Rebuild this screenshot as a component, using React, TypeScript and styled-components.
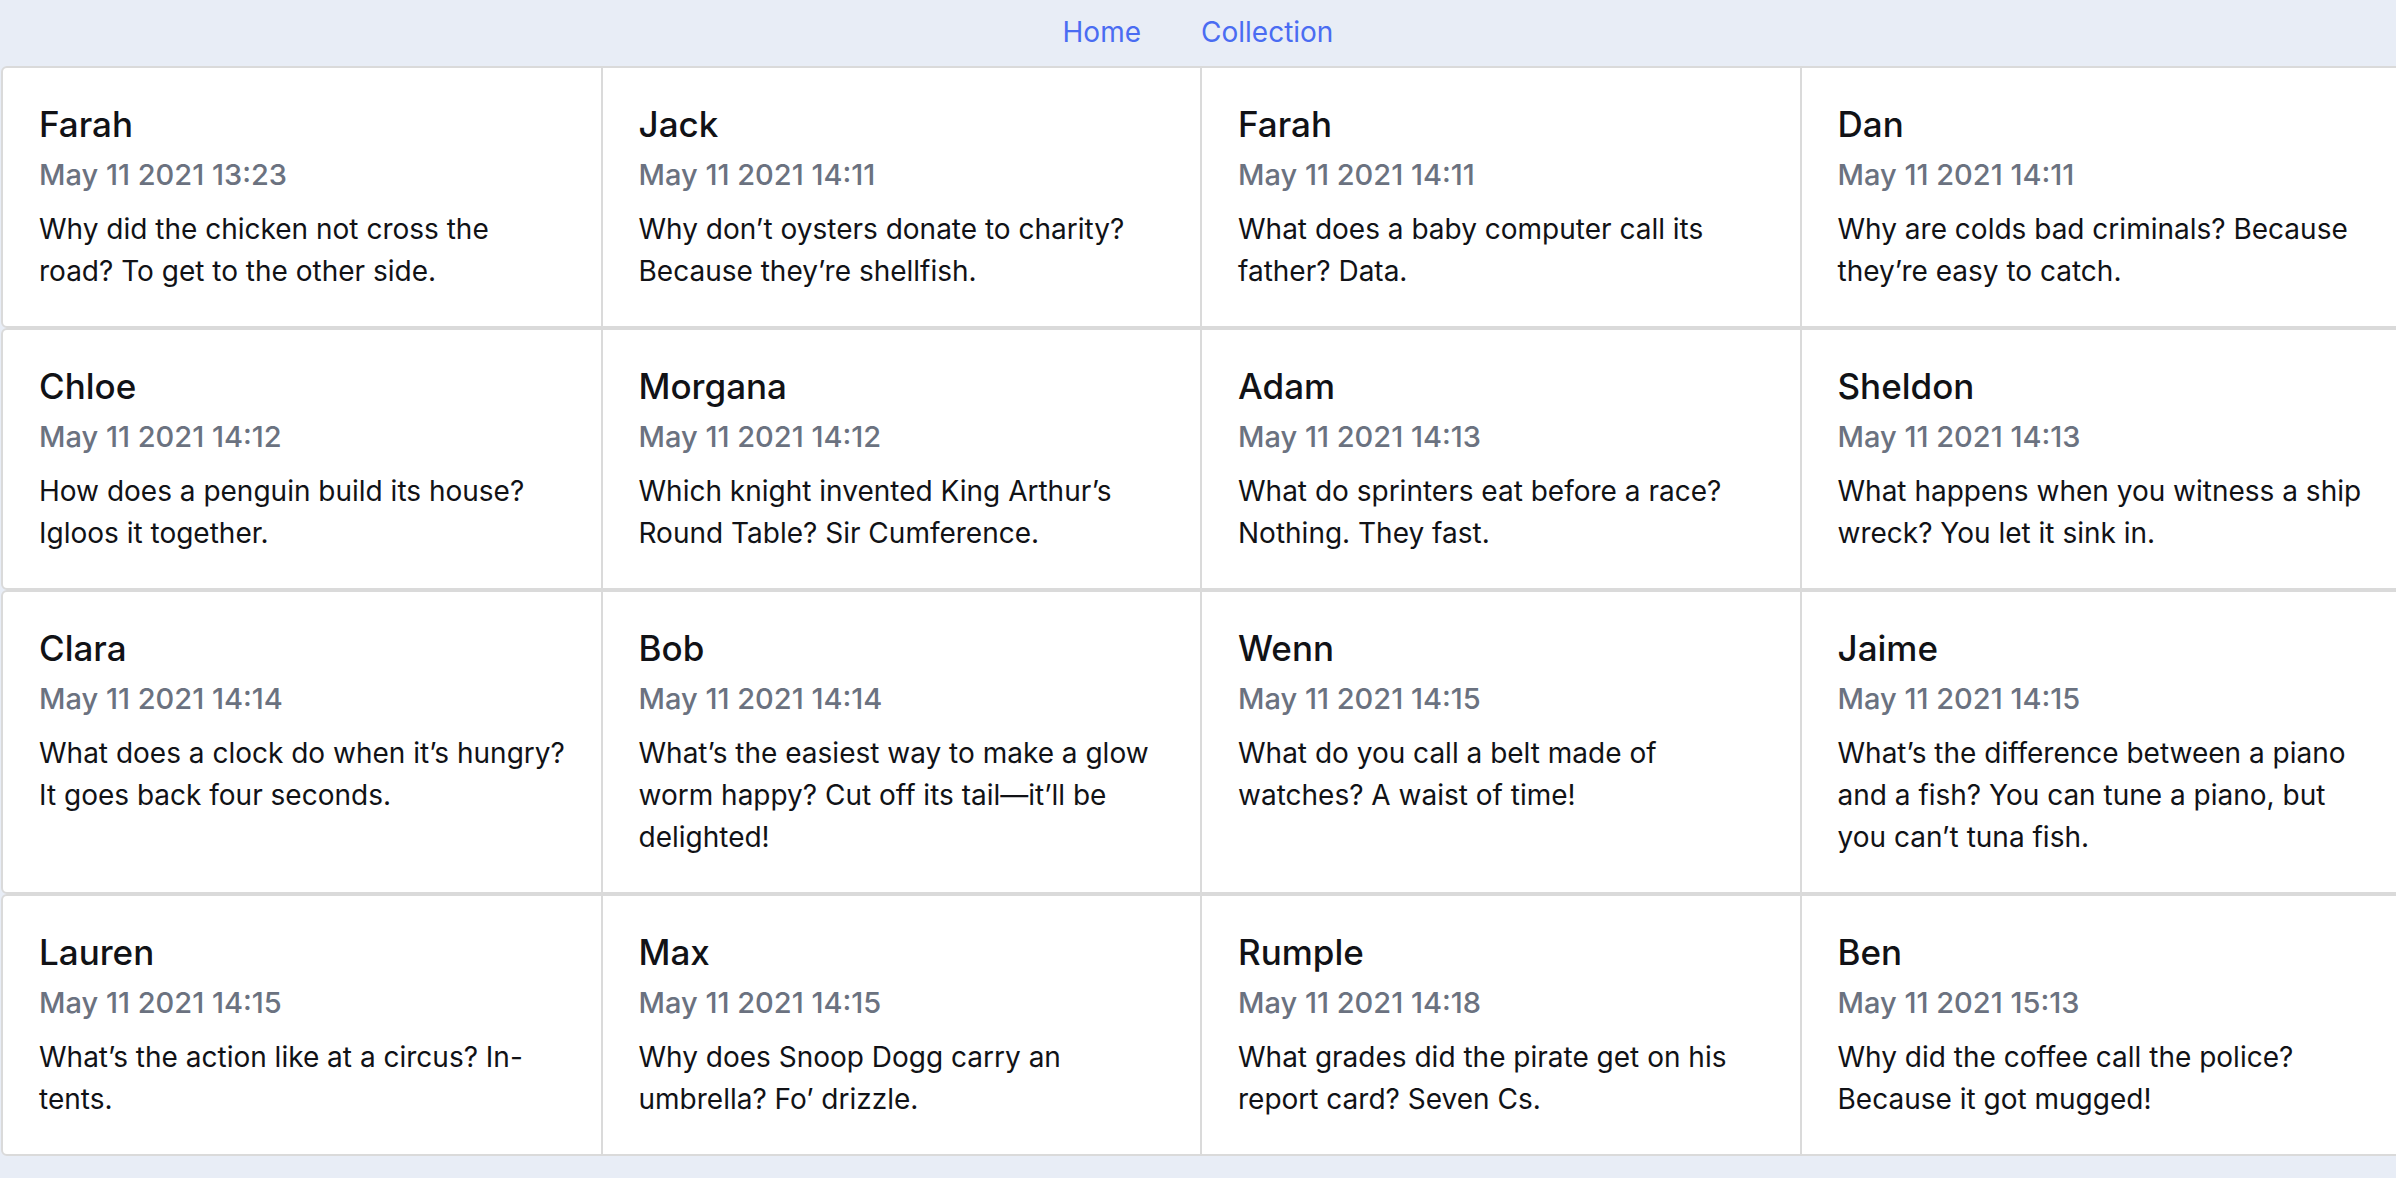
import React from 'react'
import styled, { createGlobalStyle } from 'styled-components'

const jokes = [
    { name: 'Farah', date: 'May 11 2021 13:23', text: 'Why did the chicken not cross the road? To get to the other side.' },
    { name: 'Jack', date: 'May 11 2021 14:11', text: 'Why don’t oysters donate to charity? Because they’re shellfish.' },
    { name: 'Farah', date: 'May 11 2021 14:11', text: 'What does a baby computer call its father? Data.' },
    { name: 'Dan', date: 'May 11 2021 14:11', text: 'Why are colds bad criminals? Because they’re easy to catch.' },
    { name: 'Chloe', date: 'May 11 2021 14:12', text: 'How does a penguin build its house? Igloos it together.' },
    { name: 'Morgana', date: 'May 11 2021 14:12', text: 'Which knight invented King Arthur’s Round Table? Sir Cumference.' },
    { name: 'Adam', date: 'May 11 2021 14:13', text: 'What do sprinters eat before a race? Nothing. They fast.' },
    { name: 'Sheldon', date: 'May 11 2021 14:13', text: 'What happens when you witness a ship wreck? You let it sink in.' },
    { name: 'Clara', date: 'May 11 2021 14:14', text: 'What does a clock do when it’s hungry? It goes back four seconds.' },
    { name: 'Bob', date: 'May 11 2021 14:14', text: 'What’s the easiest way to make a glow worm happy? Cut off its tail—it’ll be delighted!' },
    { name: 'Wenn', date: 'May 11 2021 14:15', text: 'What do you call a belt made of watches? A waist of time!' },
    { name: 'Jaime', date: 'May 11 2021 14:15', text: 'What’s the difference between a piano and a fish? You can tune a piano, but you can’t tuna fish.' },
    { name: 'Lauren', date: 'May 11 2021 14:15', text: 'What’s the action like at a circus? In-tents.' },
    { name: 'Max', date: 'May 11 2021 14:15', text: 'Why does Snoop Dogg carry an umbrella? Fo’ drizzle.' },
    { name: 'Rumple', date: 'May 11 2021 14:18', text: 'What grades did the pirate get on his report card? Seven Cs.' },
    { name: 'Ben', date: 'May 11 2021 15:13', text: 'Why did the coffee call the police? Because it got mugged!' },
]

type Joke = typeof jokes[number]

function JokeCard({ joke }: { joke: Joke }) {
    return (
        <Card>
            <Name>{joke.name}</Name>
            <DateLine>{joke.date}</DateLine>
            <Text>{joke.text}</Text>
        </Card>
    )
}

function App() {
    const rows: Joke[][] = []
    for (let i = 0; i < jokes.length; i += 4) rows.push(jokes.slice(i, i + 4))

    return (
        <>
            <GlobalStyle />
            <Page>
                <Nav>
                    <NavLink href="#">Home</NavLink>
                    <NavLink href="#">Collection</NavLink>
                </Nav>
                <List>
                    {rows.map((row, i) => (
                        <Row key={i}>
                            {row.map((joke, j) => (
                                <JokeCard key={j} joke={joke} />
                            ))}
                        </Row>
                    ))}
                </List>
            </Page>
        </>
    )
}

export default App

const GlobalStyle = createGlobalStyle`
    body {
        margin : 0;
        background : #e8edf6;
        font-family : Inter, "Noto Sans", sans-serif;
        color : #111216;
        overflow-x : hidden;
    }
`

const Page = styled.div`
    min-height : 100vh;
    background : #e8edf6;
    overflow-x : hidden;
`

const Nav = styled.nav`
    height : 66px;
    display : flex;
    justify-content : center;
    align-items : center;
    gap : 60px;
    padding-bottom : 2px;
    box-sizing : border-box;
`

const NavLink = styled.a`
    color : #4a6cf2;
    text-decoration : none;
    font-size : 28px;
    line-height : 40px;
`

const List = styled.div`
    display : flex;
    flex-direction : column;
    padding-left : 1px;
    margin-right : -5px;
`

const Row = styled.div`
    display : flex;
    background : #fff;
    border : 2px solid #dadada;
    border-radius : 6px;
`

const Card = styled.div`
    flex : 1;
    min-width : 0;
    padding : 36px 30px 34px 36px;
    border-left : 2px solid #dadada;

    &:first-child {
        border-left : none;
    }
`

const Name = styled.div`
    font-size : 35px;
    line-height : 40px;
    font-weight : 500;
`

const DateLine = styled.div`
    margin-top : 11px;
    font-size : 29px;
    line-height : 40px;
    font-weight : 500;
    color : #6b7280;
`

const Text = styled.p`
    margin : 13px 0 0;
    font-size : 28px;
    line-height : 42px;
`
